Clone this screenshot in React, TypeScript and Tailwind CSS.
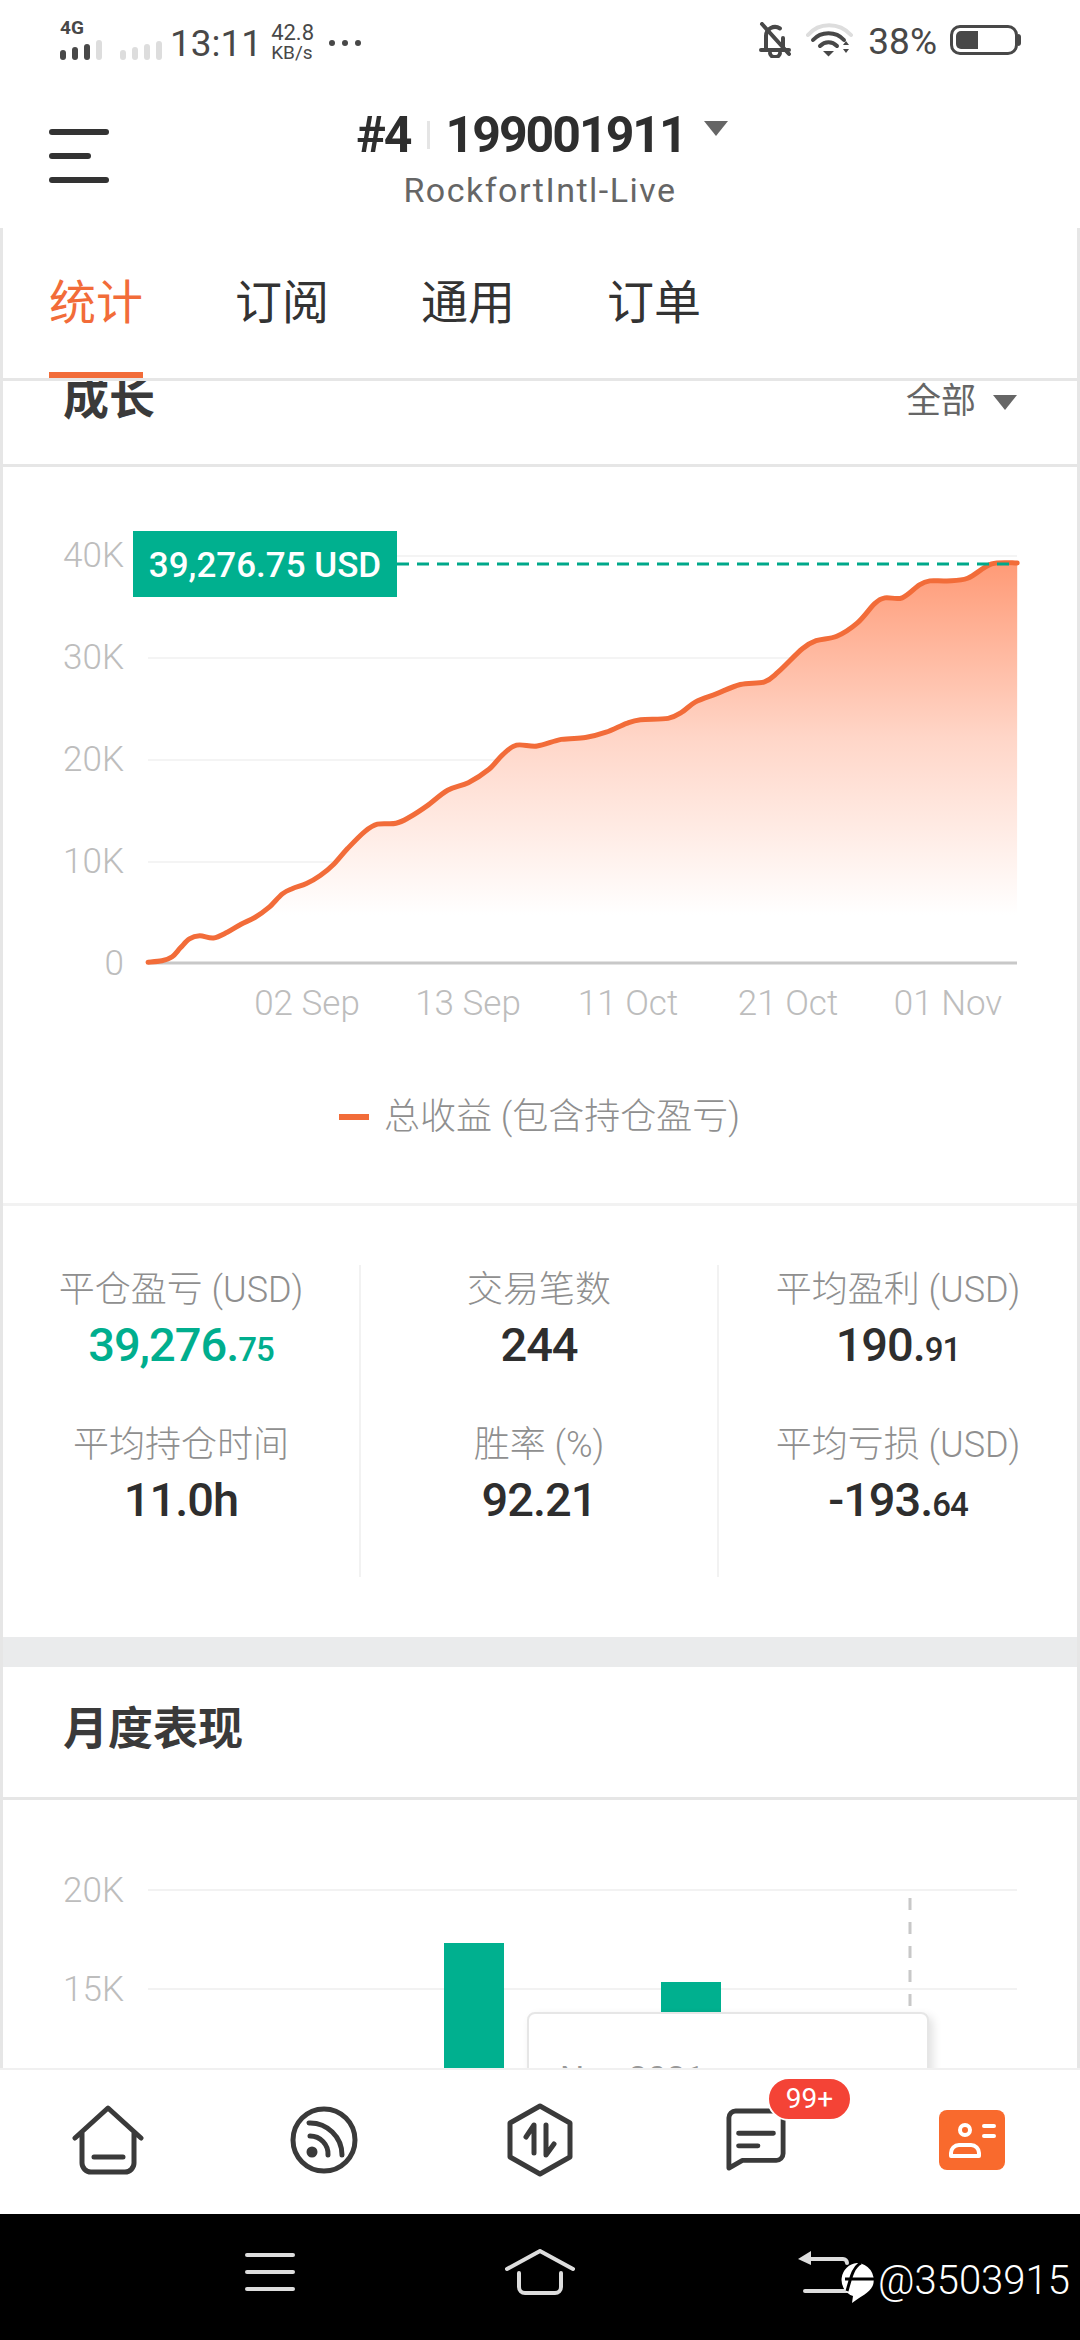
const font = "font-['Roboto','Noto_Sans_CJK_SC',sans-serif]"

// curve points read off the chart, in page pixels
const raw = [
  [215, 1080], [235, 1077], [250, 1068], [262, 1048], [275, 1028], [290, 1021], [310, 1026], [330, 1013], [350, 995],
  [370, 980], [390, 958], [410, 927], [425, 915], [445, 904], [465, 886], [485, 860], [505, 825], [530, 787], [548, 771],
  [575, 769], [595, 755], [620, 730], [650, 695], [680, 678], [710, 648], [730, 615], [750, 594], [780, 596], [815, 581],
  [850, 577], [880, 565], [910, 545], [930, 537], [970, 534], [990, 520], [1010, 497], [1040, 479], [1075, 458], [1110, 452],
  [1130, 430], [1165, 378], [1185, 360], [1215, 350], [1245, 320], [1270, 277], [1285, 264], [1310, 264], [1335, 235],
  [1350, 226], [1375, 226], [1405, 220], [1440, 188], [1477, 186],
]
const pts = raw.map(([x, y]) => [x / 1.452, y / 2.24 + 480])

function smooth(p: number[][]) {
  let d = `M${p[0][0]} ${p[0][1]}`
  for (let i = 0; i < p.length - 1; i++) {
    const a = p[Math.max(i - 1, 0)]
    const b = p[i]
    const c = p[i + 1]
    const e = p[Math.min(i + 2, p.length - 1)]
    d += ` C${b[0] + (c[0] - a[0]) / 6} ${b[1] + (c[1] - a[1]) / 6} ${c[0] - (e[0] - b[0]) / 6} ${c[1] - (e[1] - b[1]) / 6} ${c[0]} ${c[1]}`
  }
  return d
}
const line = smooth(pts)

const yLabels = [['40K', 555], ['30K', 657], ['20K', 759], ['10K', 861], ['0', 963]] as const
const xLabels = [['02 Sep', 307], ['13 Sep', 468], ['11 Oct', 628], ['21 Oct', 788], ['01 Nov', 948]] as const

function Triangle() {
  return <span className="w-0 h-0 border-x-[12px] border-x-transparent border-t-[15px] border-t-[#666666]" />
}

function StatusBar() {
  const dark = [10, 13, 16]
  return (
    <div className="h-[80px] flex items-center justify-between pl-[60px] pr-[59px] text-[#484848]">
      <div className="flex items-center">
        <div className="w-[96px] h-[40px] relative">
          <span className="absolute -top-[1px] left-0 text-[19px] leading-[18px] font-bold">4G</span>
          <div className="absolute bottom-0 left-0 flex items-end gap-[6px]">
            {dark.map((h) => <span key={h} className="w-[6px] bg-[#484848] rounded-[3px]" style={{ height: h }} />)}
            <span className="w-[6px] h-[20px] bg-[#dddddd] rounded-[3px]" />
            <span className="w-[6px] h-[10px] bg-[#dddddd] rounded-[3px] ml-[12px]" />
            <span className="w-[6px] h-[13px] bg-[#dddddd] rounded-[3px]" />
            <span className="w-[6px] h-[16px] bg-[#dddddd] rounded-[3px]" />
            <span className="w-[6px] h-[19px] bg-[#dddddd] rounded-[3px]" />
          </div>
        </div>
        <span className="ml-[14px] mt-[7px] text-[37px] leading-[40px]">13:11</span>
        <div className="ml-[9px] mt-[6px] flex flex-col text-[22px] leading-[20px]">
          <span>42.8</span>
          <span className="text-[19px]">KB/s</span>
        </div>
        <div className="ml-[15px] mt-[6px] flex gap-[7px]">
          <span className="w-[6px] h-[6px] rounded-full bg-[#484848]" />
          <span className="w-[6px] h-[6px] rounded-full bg-[#484848]" />
          <span className="w-[6px] h-[6px] rounded-full bg-[#484848]" />
        </div>
      </div>
      <div className="flex items-center">
        <svg width="34" height="36" viewBox="0 0 34 36" fill="none" stroke="#484848" strokeWidth="4" strokeLinecap="round">
          <path d="M8 26V14a9 9 0 0 1 14-7.500M25 16v10" />
          <path d="M3 28h28M12 31a5 4 0 0 0 10 0M4 2l27 30" />
        </svg>
        <svg className="ml-[14px]" width="48" height="34" viewBox="0 0 48 34" fill="none" strokeLinecap="round">
          <path d="M2 12C13 -1 33 -1 45 12" stroke="#dddddd" strokeWidth="4" />
          <path d="M7 17C15 8 30 8 38 17M14 23c5-5 12-5 17 0" stroke="#484848" strokeWidth="4" />
          <path d="M17 28h11l-5.500 5.500z" fill="#484848" />
          <path d="M37 22l3-4 3 4zM37 26l3 4 3-4z" fill="#484848" />
        </svg>
        <span className="ml-[14px] mt-[3px] text-[37px] leading-[36px]">38%</span>
        <div className="ml-[13px] w-[68px] h-[30px] rounded-[10px] border-[3px] border-[#484848] p-[3px]">
          <div className="w-[22px] h-full bg-[#484848] rounded-l-[5px]" />
        </div>
        <span className="w-[3px] h-[12px] bg-[#484848] rounded-r-[3px]" />
      </div>
    </div>
  )
}

function Header() {
  return (
    <div className="h-[148px] grid grid-cols-[109px_1fr_109px]">
      <div className="pl-[49px] pt-[49px] flex flex-col gap-[18px]">
        <span className="w-[60px] h-[6px] rounded-full bg-[#333333]" />
        <span className="w-[42px] h-[6px] rounded-full bg-[#333333]" />
        <span className="w-[60px] h-[6px] rounded-full bg-[#333333]" />
      </div>
      <div className="flex flex-col items-center">
        <div className="flex items-center mt-[30px] ml-[4px] h-[50px] text-[#2e2e2e] font-bold text-[50px] leading-[50px] tracking-[-2px]">
          <span>#4</span>
          <span className="w-[3px] h-[28px] bg-[#e5e5e5] mx-[16px]" />
          <span>199001911</span>
          <span className="ml-[18px] -mt-[14px] flex"><Triangle /></span>
        </div>
        <span className="mt-[12px] text-[34px] leading-[36px] tracking-[1.5px] text-[#666666]">RockfortIntl-Live</span>
      </div>
      <div />
    </div>
  )
}

function Tabs() {
  const tabs = ['统计', '订阅', '通用', '订单']
  return (
    <div className="h-[153px] border-b-[3px] border-[#e6e6e6] flex gap-[92px] pl-[46px]">
      {tabs.map((t, i) => (
        <div
          key={t}
          className={
            i === 0
              ? 'h-[150px] w-[94px] flex items-center justify-center pt-[6px] text-[47px] text-[#f26c39] border-b-[6px] border-[#f26c39]'
              : 'h-[150px] w-[94px] flex items-center justify-center pt-[6px] text-[47px] text-[#333333] border-b-[6px] border-transparent'
          }
        >
          {t}
        </div>
      ))}
    </div>
  )
}

function GrowthChart() {
  return (
    <div className="h-[739px] border-b-[3px] border-[#f2f2f2]">
      <svg width="1074" height="736" viewBox="3 467 1074 736" className="block">
        <defs>
          <linearGradient id="area" gradientUnits="userSpaceOnUse" x1="0" y1="562" x2="0" y2="915">
            <stop offset="0" stopColor="#ff9a76" />
            <stop offset="0.5" stopColor="#ffd6c8" />
            <stop offset="1" stopColor="#ffffff" />
          </linearGradient>
        </defs>
        {yLabels.slice(0, 4).map(([, y]) => (
          <line key={y} x1="148" x2="1017" y1={y + 1} y2={y + 1} stroke="#f4f4f4" strokeWidth="2" />
        ))}
        <path d={`${line} L1017 963 L148 963 Z`} fill="url(#area)" />
        <line x1="148" x2="1017" y1="963" y2="963" stroke="#c8c8c8" strokeWidth="3" />
        <path d={line} fill="none" stroke="#f26c39" strokeWidth="5" strokeLinecap="round" />
        <line x1="397" x2="1017" y1="564" y2="564" stroke="#00a88a" strokeWidth="3" strokeDasharray="12 8" />
        {yLabels.map(([t, y]) => (
          <text key={t} x="124" y={y + 12} textAnchor="end" fontSize="35" fontWeight="300" fill="#bdbdbd" className={font}>{t}</text>
        ))}
        {xLabels.map(([t, x]) => (
          <text key={t} x={x} y="1015" textAnchor="middle" fontSize="35" fontWeight="300" fill="#bdbdbd" className={font}>{t}</text>
        ))}
        <rect x="133" y="531" width="264" height="66" fill="#00b08f" />
        <text x="265" y="577" textAnchor="middle" fontSize="35" fontWeight="500" fill="#ffffff" className={font}>39,276.75 USD</text>
        <rect x="339" y="1114" width="30" height="6" fill="#f26c39" />
        <text x="384" y="1129" fontSize="36" fontWeight="300" fill="#8f8f8f" className={font}>总收益 (包含持仓盈亏)</text>
      </svg>
    </div>
  )
}

function Stat({ label, value, cents, green }: { label: string; value: string; cents?: string; green?: boolean }) {
  return (
    <div className="flex flex-col items-center">
      <span className="h-[50px] text-[36px] leading-[50px] font-light text-[#8f8f8f] whitespace-nowrap">{label}</span>
      <span className={green ? 'h-[60px] text-[47px] leading-[60px] font-medium text-[#00ae8e] tracking-[-1px]' : 'h-[60px] text-[47px] leading-[60px] font-medium text-[#2e2e2e] tracking-[-1px]'}>
        {value}
        {cents && <span className="text-[33px]">{cents}</span>}
      </span>
    </div>
  )
}

function Stats() {
  return (
    <div className="pt-[59px] pb-[60px] grid grid-cols-3">
      <div className="h-[312px] border-r-2 border-[#f2f2f2] flex flex-col gap-[45px]">
        <Stat label="平仓盈亏 (USD)" value="39,276." cents="75" green />
        <Stat label="平均持仓时间" value="11.0h" />
      </div>
      <div className="h-[312px] border-r-2 border-[#f2f2f2] flex flex-col gap-[45px]">
        <Stat label="交易笔数" value="244" />
        <Stat label="胜率 (%)" value="92.21" />
      </div>
      <div className="h-[312px] flex flex-col gap-[45px]">
        <Stat label="平均盈利 (USD)" value="190." cents="91" />
        <Stat label="平均亏损 (USD)" value="-193." cents="64" />
      </div>
    </div>
  )
}

function MonthlyChart() {
  return (
    <div className="relative flex-1 overflow-hidden">
      <svg width="1074" height="268" viewBox="3 1800 1074 268" className="block">
        <line x1="148" x2="1017" y1="1890" y2="1890" stroke="#f2f2f2" strokeWidth="2" />
        <line x1="148" x2="1017" y1="1989" y2="1989" stroke="#f2f2f2" strokeWidth="2" />
        <text x="124" y="1902" textAnchor="end" fontSize="35" fontWeight="300" fill="#bdbdbd" className={font}>20K</text>
        <text x="124" y="2001" textAnchor="end" fontSize="35" fontWeight="300" fill="#bdbdbd" className={font}>15K</text>
        <rect x="444" y="1943" width="60" height="125" fill="#00b08f" />
        <rect x="661" y="1982" width="60" height="86" fill="#00b08f" />
        <line x1="910" x2="910" y1="1898" y2="2012" stroke="#c8c8c8" strokeWidth="3" strokeDasharray="12 12" />
      </svg>
      <div className="absolute left-[524px] top-[212px] w-[402px] h-[200px] bg-white border-2 border-[#e6e6e6] rounded-[8px] shadow-[4px_4px_10px_rgba(0,0,0,0.12)] pt-[44px] pl-[31px] text-[34px] leading-[40px] text-[#999999]">
        Nov 2021
      </div>
    </div>
  )
}

function BottomNav() {
  return (
    <div className="h-[146px] bg-white border-t-2 border-[#f0f0f0] grid grid-cols-5 place-items-center pb-[4px]">
      <svg width="72" height="70" viewBox="0 0 72 70" fill="none" stroke="#3a3a3a" strokeWidth="5" strokeLinecap="round" strokeLinejoin="round">
        <path d="M3 33L36 3l33 30M10 28v30a9 9 0 0 0 9 9h34a9 9 0 0 0 9-9V28M22 52h29" />
      </svg>
      <svg width="68" height="68" viewBox="0 0 68 68" fill="none" stroke="#3a3a3a" strokeWidth="5" strokeLinecap="round">
        <circle cx="34" cy="34" r="31" />
        <path d="M20 30a18 18 0 0 1 18 19M19 17a32 32 0 0 1 33 32" />
        <circle cx="22" cy="46" r="3" fill="#3a3a3a" />
      </svg>
      <svg width="68" height="74" viewBox="0 0 68 74" fill="none" stroke="#3a3a3a" strokeWidth="5" strokeLinecap="round" strokeLinejoin="round">
        <path d="M34 3l30 17v34L34 71 4 54V20z" />
        <path d="M28 50V22l-8 12M40 22v30l8-11" />
      </svg>
      <div className="relative w-[60px] h-[66px]">
        <svg width="60" height="66" viewBox="0 0 62 66" fill="none" stroke="#3a3a3a" strokeWidth="5" strokeLinecap="round" strokeLinejoin="round">
          <path d="M3 62V10a7 7 0 0 1 7-7h42a7 7 0 0 1 7 7v37a7 7 0 0 1-7 7H17z" />
          <path d="M13 26h36M13 39h20" />
        </svg>
        <span className="absolute -top-[30px] left-[41px] w-[85px] h-[44px] rounded-full border-2 border-white bg-[#f44336] flex items-center justify-center text-[28px] leading-none text-white">99+</span>
      </div>
      <div className="w-[66px] h-[60px] rounded-[8px] bg-[#f96a2d] flex items-center justify-center">
        <svg width="48" height="40" viewBox="0 0 48 40" fill="none" stroke="#ffffff" strokeWidth="4" strokeLinecap="round" strokeLinejoin="round">
          <circle cx="17" cy="10" r="5" />
          <path d="M3 36v-3a8 8 0 0 1 8-8h12a8 8 0 0 1 8 8v3z" />
          <path d="M36 6h10M36 16h10" />
        </svg>
      </div>
    </div>
  )
}

function SystemBar() {
  return (
    <div className="relative h-[126px] bg-black px-[135px] grid grid-cols-3 place-items-center pb-[10px]">
      <div className="flex flex-col gap-[13px]">
        <span className="w-[50px] h-[4px] rounded-full bg-[#dddddd]" />
        <span className="w-[50px] h-[4px] rounded-full bg-[#dddddd]" />
        <span className="w-[50px] h-[4px] rounded-full bg-[#dddddd]" />
      </div>
      <svg width="70" height="46" viewBox="0 0 70 46" fill="none" stroke="#dddddd" strokeWidth="4" strokeLinecap="round" strokeLinejoin="round">
        <path d="M2 20L35 2l33 18M14 24v14a6 6 0 0 0 6 6h30a6 6 0 0 0 6-6V24" />
      </svg>
      <svg className="ml-[30px]" width="56" height="46" viewBox="0 0 56 46" fill="none" stroke="#dddddd" strokeWidth="4" strokeLinecap="round">
        <path d="M8 10h38a4 4 0 0 1 4 4M8 42h42" />
        <path d="M14 2v14L1 10z" fill="#dddddd" stroke="none" />
      </svg>
      <div className="absolute left-[839px] top-[49px] flex items-start">
        <svg width="36" height="41" viewBox="0 0 36 41" fill="none">
          <path d="M18 0a17 17 0 0 1 16 22c-3 8-12 11-21 18l1-7A17 17 0 0 1 18 0z" fill="#ffffff" />
          <path d="M22 0C14 4 12 14 8 28M6 16h29" stroke="#000000" strokeWidth="3" />
        </svg>
        <span className="ml-[3px] -mt-[4px] text-[40px] leading-[44px] font-light text-white">@3503915</span>
      </div>
    </div>
  )
}

export default function App() {
  return (
    <div className={`${font} w-[1080px] h-[2340px] overflow-hidden bg-white flex flex-col`}>
      <StatusBar />
      <Header />
      <div className="flex-1 min-h-0 flex flex-col border-x-[3px] border-[#e6e6e6] overflow-hidden">
        <Tabs />
        <div className="h-[86px] border-b-[3px] border-[#e6e6e6] flex items-start justify-between pl-[60px] pr-[60px] overflow-hidden">
          <span className="text-[46px] leading-[34px] font-bold text-[#3a3a3a]">成长</span>
          <div className="flex items-center gap-[17px] h-[42px]">
            <span className="text-[35px] leading-[42px] text-[#666666]">全部</span>
            <Triangle />
          </div>
        </div>
        <GrowthChart />
        <Stats />
        <div className="h-[30px] bg-[#eaebec]" />
        <div className="h-[133px] border-b-[3px] border-[#e6e6e6] flex items-center pl-[60px] pb-[4px]">
          <span className="text-[45px] leading-[50px] font-bold text-[#3a3a3a]">月度表现</span>
        </div>
        <MonthlyChart />
      </div>
      <BottomNav />
      <SystemBar />
    </div>
  )
}
